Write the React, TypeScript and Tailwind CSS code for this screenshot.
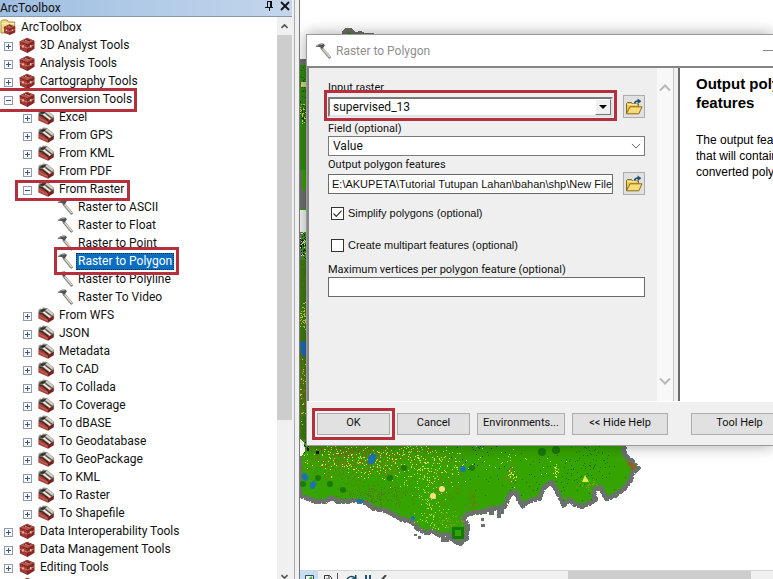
import { useState } from "react";
import type { ReactNode } from "react";

type IconKind = "root" | "toolbox" | "toolset" | "tool";

interface TreeItem {
  label: string;
  level: 0 | 1 | 2 | 3;
  open?: boolean;
  mark?: string;
}

const ICONS: IconKind[] = ["root", "toolbox", "toolset", "tool"];
const INDENT = ["pl-0", "pl-1", "pl-[23px]", "pl-[57px]"];

const TREE: TreeItem[] = [
  { label: "ArcToolbox", level: 0 },
  { label: "3D Analyst Tools", level: 1 },
  { label: "Analysis Tools", level: 1 },
  { label: "Cartography Tools", level: 1 },
  {
    label: "Conversion Tools",
    level: 1,
    open: true,
    mark: "-left-1 -top-[2px] w-[141px] h-6",
  },
  { label: "Excel", level: 2 },
  { label: "From GPS", level: 2 },
  { label: "From KML", level: 2 },
  { label: "From PDF", level: 2 },
  {
    label: "From Raster",
    level: 2,
    open: true,
    mark: "left-[15px] top-0 w-[115px] h-[21px]",
  },
  { label: "Raster to ASCII", level: 3 },
  { label: "Raster to Float", level: 3 },
  { label: "Raster to Point", level: 3 },
  {
    label: "Raster to Polygon",
    level: 3,
    mark: "left-[54px] -top-[5px] w-[125px] h-7",
  },
  { label: "Raster to Polyline", level: 3 },
  { label: "Raster To Video", level: 3 },
  { label: "From WFS", level: 2 },
  { label: "JSON", level: 2 },
  { label: "Metadata", level: 2 },
  { label: "To CAD", level: 2 },
  { label: "To Collada", level: 2 },
  { label: "To Coverage", level: 2 },
  { label: "To dBASE", level: 2 },
  { label: "To Geodatabase", level: 2 },
  { label: "To GeoPackage", level: 2 },
  { label: "To KML", level: 2 },
  { label: "To Raster", level: 2 },
  { label: "To Shapefile", level: 2 },
  { label: "Data Interoperability Tools", level: 1 },
  { label: "Data Management Tools", level: 1 },
  { label: "Editing Tools", level: 1 },
  { label: "", level: 1 },
];

function Toolbox() {
  return (
    <>
      <path d="M0.5 4.5 8 0.8l7.5 3v8L8.5 16 1 12.5z" fill="#7d2320" />
      <path d="M0.8 4.6 8 1.2l7 2.8-6.6 3.2z" fill="#b5564c" />
      <path d="M1 5.4 8 8v7.2L1.5 12z" fill="#a53a33" />
      <path d="M8.8 8 15 5v6.6l-6.2 3.6z" fill="#8a2723" />
      <path d="M4.5 3.6 8 2l3.6 1.4-3 1.6z" fill="#6b1c1a" />
      <path d="M1.2 8.4 8.4 11 15 7.8" stroke="#d98a80" strokeWidth="0.8" fill="none" />
      <path d="M4 8.2v2.2M11.8 8v2.4" stroke="#f2d5cb" strokeWidth="1.3" />
      <path d="M6 3.4 9.6 4.6" stroke="#e3a89d" strokeWidth="0.9" />
    </>
  );
}

function Hammer() {
  return (
    <>
      <path d="M7 5.4 14.4 14.2" stroke="#85837a" strokeWidth="2.8" strokeLinecap="round" />
      <path d="M7.4 5.4 14.4 13.6" stroke="#e4e1d5" strokeWidth="1.3" strokeLinecap="round" />
      <path d="M0.4 4.2C2 1.6 4.6 0.2 8 0.6L10 2 8.8 4 7.2 6 5.6 4.6C4 3.6 2.4 3.8 0.4 4.2z" fill="#505353" />
      <path d="M1.8 3C3.6 1.6 5.4 1.2 7.8 1.6" stroke="#a2a8a8" strokeWidth="0.8" fill="none" />
    </>
  );
}

function ItemIcon({ kind, size = "size-4" }: { kind: IconKind; size?: string }) {
  return (
    <svg viewBox="0 0 16 16" className={`${size} shrink-0`} aria-hidden="true">
      {kind === "toolbox" && <Toolbox />}
      {kind === "tool" && <Hammer />}
      {kind === "root" && (
        <>
          <path d="M1 14V2.5L2.5 1H7l1.5 2h6.2v11z" fill="#f3dd83" stroke="#a58a3b" />
          <path d="M1.5 4.8h13" stroke="#fff3b8" />
          <g transform="translate(3.4 4.8) scale(.76 .7)">
            <Toolbox />
          </g>
        </>
      )}
      {kind === "toolset" && (
        <>
          <path d="M0.4 3.4 2 1.4 4 2 5 .6 9 1 15.8 6.6V10L10 14 0.4 7z" fill="#8d897f" />
          <path d="M0.4 7.4 3 6l9.6 5L10 15.8 0.4 11.4z" fill="#a8423b" />
          <path d="M10 12 15.8 8.6v3.6L10 15.8z" fill="#76211f" />
          <path d="M1 4.6 4.4 2.2 8.4 2 5.8 5z" fill="#2b2e2d" />
          <path d="M7.4 3 9.4 1.8 15.4 6.6 14.2 8.4z" fill="#d3cfc2" />
          <path d="M5.4 4.8 12.4 10.4" stroke="#f0eee4" strokeWidth="1.6" />
          <path d="M0.8 5.8 4 6.6 10.2 11.4" stroke="#33211f" strokeWidth="1.3" fill="none" />
          <path d="M7.6 4.6 14 9.2" stroke="#44403a" strokeWidth="0.9" />
          <path d="M1.4 9.4 9.4 13.4" stroke="#cf7c72" strokeWidth="0.7" />
        </>
      )}
    </svg>
  );
}

function Expander({ open, label, onClick }: { open: boolean; label: string; onClick: () => void }) {
  return (
    <button type="button" aria-label={`Toggle ${label}`} onClick={onClick} className="mr-1.5 mt-0.5 size-[9px] shrink-0">
      <svg viewBox="0 0 9 9" className="block size-full" shapeRendering="crispEdges">
        <rect x="0.5" y="0.5" width="8" height="8" fill="#fbfbfb" stroke="#919aa8" />
        <path d={open ? "M2 4.5h5" : "M2 4.5h5M4.5 2v5"} stroke="#3f5686" />
      </svg>
    </button>
  );
}

function Chevron({ d, className }: { d: string; className: string }) {
  return (
    <svg viewBox="0 0 12 8" className={className} fill="none" aria-hidden="true">
      <path d={d} stroke="currentColor" />
    </svg>
  );
}

function ToolboxPanel() {
  const [selected, setSelected] = useState("Raster to Polygon");
  const [opened, setOpened] = useState<Record<string, boolean>>({});

  return (
    <aside className="flex w-[295px] shrink-0 flex-col border-r border-[#a9adb3] bg-[#f0f0f0] pr-0.5">
      <header className="flex h-[17px] shrink-0 items-center border-b border-[#8997a9] bg-linear-to-r from-[#9fbfe2] to-[#c3d6ec] text-[#111]">
        <h1 className="-mt-px flex-1 leading-4">ArcToolbox</h1>
        <button type="button" aria-label="Auto hide" className="mr-1.5 mb-1 size-2.5">
          <svg viewBox="0 0 10 10" className="block size-full" fill="none" stroke="#111" shapeRendering="crispEdges">
            <path d="M3 0.5h4.5M3.5 0v6M6.5 0v6M7.5 0v6M1 6.5h8M5.5 6v4" />
          </svg>
        </button>
        <button type="button" aria-label="Close" className="mr-0.5 mb-1 size-2.5">
          <svg viewBox="0 0 10 10" className="block size-full" fill="none" stroke="#111" strokeWidth="1.8">
            <path d="M1 1l8 8M9 1 1 9" />
          </svg>
        </button>
      </header>
      <div className="flex min-h-0 flex-1 bg-white">
        <ul className="min-w-0 flex-1 pt-px">
          {TREE.map((item) => {
            const active = item.label === selected;
            const open = opened[item.label] ?? !!item.open;
            return (
              <li key={item.label} className={`relative flex h-[18px] items-center ${INDENT[item.level]}`}>
                {(item.level === 1 || item.level === 2) && (
                  <Expander
                    open={open}
                    label={item.label}
                    onClick={() => setOpened((prev) => ({ ...prev, [item.label]: !open }))}
                  />
                )}
                <ItemIcon kind={ICONS[item.level]} />
                <button
                  type="button"
                  onClick={() => setSelected(item.label)}
                  className={`ml-[3px] px-0.5 leading-[17px] whitespace-nowrap ${
                    active ? "bg-[#0a6fc2] text-white outline-1 -outline-offset-1 outline-dotted outline-[#16293c]" : ""
                  }`}
                >
                  {item.label}
                </button>
                {item.mark && (
                  <span className={`pointer-events-none absolute z-10 border-3 border-[#b5303c] ${item.mark}`} />
                )}
              </li>
            );
          })}
        </ul>
        <div className="flex w-[15px] shrink-0 flex-col bg-[#f0f0f0] text-[#505050]">
          <div className="flex h-[18px] items-center justify-center">
            <Chevron d="M2 6.5 6 2.5l4 4" className="h-1.5 w-[9px] stroke-2" />
          </div>
          <div className="h-[385px] bg-[#cdcdcd]" />
          <div className="flex-1" />
          <div className="flex h-[5px] items-center justify-center">
            <Chevron d="M2 1.5l4 4 4-4" className="h-1.5 w-[9px] stroke-2" />
          </div>
        </div>
      </div>
    </aside>
  );
}

// [x, y, spread x, spread y, count, colour]
const CLUSTERS: [number, number, number, number, number, string][] = [
  [45, 452, 70, 34, 1100, "#5f7f12"],
  [50, 458, 60, 25, 520, "#7a6a12"],
  [120, 455, 60, 25, 420, "#6c7a10"],
  [60, 455, 70, 25, 260, "#e0ee4c"],
  [125, 462, 45, 30, 170, "#e0ee4c"],
  [75, 495, 45, 14, 240, "#5b7312"],
  [130, 500, 20, 36, 120, "#bfd93a"],
  [145, 488, 20, 24, 120, "#6c7a10"],
  [172, 500, 8, 16, 70, "#6c7a10"],
  [150, 520, 18, 10, 60, "#8b9c1a"],
  [210, 475, 7, 14, 70, "#79851a"],
  [212, 476, 5, 12, 22, "#e0ee4c"],
  [256, 470, 3, 8, 26, "#e0ee4c"],
  [288, 484, 12, 6, 30, "#8f9a1b"],
  [180, 450, 34, 20, 36, "#12305c"],
  [240, 475, 90, 30, 90, "#1c6b12"],
  [290, 460, 30, 24, 70, "#246a14"],
  [190, 460, 90, 20, 40, "#d8e84a"],
  [3, 80, 5, 20, 24, "#1f5a12"],
  [3, 112, 5, 13, 50, "#203c0c"],
  [3, 112, 5, 13, 30, "#d6e35a"],
  [3, 245, 5, 14, 70, "#16240c"],
  [3, 245, 5, 14, 26, "#f4f4e0"],
  [3, 272, 5, 20, 50, "#547a1c"],
  [3, 316, 5, 16, 60, "#d0dc3c"],
  [3, 388, 5, 46, 230, "#6b7a18"],
  [3, 388, 5, 46, 36, "#d8e060"],
  [3, 446, 6, 8, 26, "#101010"],
];

function scatter() {
  let seed = 20210;
  const next = () => {
    seed = (seed * 1664525 + 1013904223) % 4294967296;
    return seed / 4294967296;
  };
  return CLUSTERS.map(([x, y, sx, sy, count, color]) => {
    let d = "";
    for (let i = 0; i < count; i++) {
      const px = Math.round(x + (next() + next() - 1) * sx);
      const py = Math.round(y + (next() + next() - 1) * sy);
      d += `M${px} ${py}h1v1h-1z`;
    }
    return { d, color };
  });
}

const SPECKLES = scatter();
const LAND =
  "M0 62H8V440H326L323 450 325 456 331 461 337 468 332 473 330 480 324 488 315 495 307 498 304 494 301 487 296 488 293 493 295 499 289 503 282 506 275 504 270 499 264 504 261 498 256 488 252 482 247 484 242 490 239 498 230 500 223 505 219 499 216 492 210 493 207 500 204 506 197 508 190 508 185 511 178 512 168 513 163 518 167 526 166 538 160 543 153 540 149 534 141 535 133 531 126 532 118 528 112 521 102 519 95 515 86 510 74 508 66 502 54 500 46 501 38 501 31 497 25 501 16 501 8 498 0 495Z";

function MapCanvas() {
  return (
    <svg
      viewBox="0 0 473 570"
      className="absolute top-0 left-0 h-[570px] w-[473px]"
      shapeRendering="crispEdges"
      role="img"
      aria-label="Classified land cover map"
    >
      <defs>
        <clipPath id="land">
          <path d={LAND} />
        </clipPath>
      </defs>
      <path d="M42 36v-5l3-3h6l4 4 6-1 4 2h9v3z" fill="#6d706a" />
      <path d="M48 34v-3l5 3z" fill="#37850f" />
      <path d={LAND} fill="#36a400" stroke="#6b716b" strokeWidth="6" strokeDasharray="6 1 3 1" />
      <path d={LAND} fill="#36a400" stroke="#6b716b" strokeWidth="4" />
      <g clipPath="url(#land)">
        <path d="M0 60h8v110H0z" fill="#338c10" />
        <path d="M0 260h8v180H0z" fill="#3f7d10" />
        {SPECKLES.map((s, i) => (
          <path key={i} d={s.d} fill={s.color} />
        ))}
        <path d="M0 60h8v5H0zM0 190h8v18H0z" fill="#6f746f" />
        <path d="M0 210h8v22H0z" fill="#f5f5f5" />
        <path d="M1 82h5v5H1z" fill="#d8d58c" />
        <path d="M0 342h8v14H2z" fill="#1d6bc4" />
        <path d="M0 439l4 4 1 8-3 5H0z" fill="#fff" />
        <path d="M332 468l-7-5 6-1 6 6-9 3z" fill="#8a6420" />
      </g>
      <g fill="#1e73a8" shapeRendering="auto">
        <ellipse cx="72" cy="459" rx="4" ry="6" transform="rotate(25 72 459)" />
        <ellipse cx="13" cy="485" rx="3" ry="4" transform="rotate(25 13 485)" />
        <ellipse cx="5" cy="477" rx="3" ry="4" transform="rotate(-30 5 477)" />
        <ellipse cx="60" cy="501" rx="4" ry="2" />
        <ellipse cx="163" cy="469" rx="3" ry="3" />
        <ellipse cx="113" cy="518" rx="2" ry="2" />
      </g>
      <g fill="#1b7a0c" shapeRendering="auto">
        <circle cx="104" cy="468" r="3" />
        <circle cx="90" cy="478" r="3" />
        <circle cx="43" cy="490" r="3" />
        <circle cx="30" cy="484" r="3" />
        <circle cx="18" cy="478" r="3" />
        <circle cx="3" cy="484" r="3" />
        <circle cx="172" cy="468" r="3" />
        <circle cx="242" cy="452" r="4" />
        <circle cx="256" cy="450" r="4" />
      </g>
      <g fill="#f4e184" shapeRendering="auto">
        <circle cx="133" cy="496" r="3" />
        <circle cx="142" cy="489" r="3" />
        <path d="M285 475l4 7h-7z" fill="#d9f04a" />
      </g>
      <path d="M153 528h9v9h-9z" fill="#36a400" stroke="#147a06" strokeWidth="3" />
      <path d="M114 534h3v2h-3zM118 536h3v3h-3zM181 518h3v3h-3zM181 524h4v3h-4zM189 510h5v5h-5zM197 509h7v5h-3v4h-4zM141 537h8v5h-8z" fill="#6b716b" />
      <path d="M7 448h2v3H7zM16 451h3v3h-3z" fill="#151515" />
    </svg>
  );
}

function FolderButton({ label }: { label: string }) {
  return (
    <button
      type="button"
      aria-label={label}
      className="flex h-[23px] w-[22px] shrink-0 items-center justify-center border border-[#adadad] bg-[#e1e1e1]"
    >
      <svg viewBox="0 0 18 18" className="size-[18px]">
        <path d="M1.5 15.5v-10l1-1h4l1 1.5h6v3" fill="#e9c65a" stroke="#8a6a18" />
        <path d="M1.5 15.8 5 8.8h12l-3.2 7z" fill="#fbdc76" stroke="#8a6a18" />
        <path d="M2.4 6.6h9.4" stroke="#fff2b5" />
        <path d="M9.5 5.5c.4-2 1.6-2.4 3.6-2.4" stroke="#1f5068" strokeWidth="1.5" fill="none" />
        <path d="M12.6.4 16.4 3.2l-3.8 2.8z" fill="#1f5068" />
      </svg>
    </button>
  );
}

function FieldLabel({ htmlFor, children }: { htmlFor: string; children: ReactNode }) {
  return (
    <label htmlFor={htmlFor} className="block h-3.5 leading-3.5 whitespace-nowrap">
      {children}
    </label>
  );
}

function CheckRow({ label, initial }: { label: string; initial: boolean }) {
  const [checked, setChecked] = useState(initial);
  return (
    <label className="flex h-4 w-fit items-center gap-1 pl-[3px] font-['Liberation_Sans',sans-serif]">
      <span className="relative block size-[13px]">
        <input
          type="checkbox"
          checked={checked}
          onChange={(e) => setChecked(e.target.checked)}
          className="block size-[13px] appearance-none border border-[#333] bg-white"
        />
        {checked && (
          <svg viewBox="0 0 13 13" className="pointer-events-none absolute inset-0" fill="none">
            <path d="M2.5 6.5 5.3 9.3 10.5 3.6" stroke="#333" strokeWidth="1.2" />
          </svg>
        )}
      </span>
      {label}
    </label>
  );
}

function DialogButton({ width, children }: { width: string; children: ReactNode }) {
  return (
    <button
      type="button"
      className={`block h-[22px] shrink-0 border border-[#adadad] bg-[#e1e1e1] whitespace-nowrap ${width}`}
    >
      {children}
    </button>
  );
}

function RasterDialog() {
  const [output, setOutput] = useState("E:\\AKUPETA\\Tutorial Tutupan Lahan\\bahan\\shp\\New File");
  const [maxVertices, setMaxVertices] = useState("");

  return (
    <section
      role="dialog"
      aria-label="Raster to Polygon"
      className="absolute top-[34px] right-0 left-1.5 overflow-hidden border border-r-0 border-[#9a9a9a] bg-[#f0f0f0] text-[11px] shadow-[0_0_14px_rgba(0,0,0,0.35)]"
    >
      <header className="flex h-[31px] items-center bg-white pl-2">
        <ItemIcon kind="tool" />
        <h2 className="ml-[5px] flex-1 text-xs text-[#8f8f8f]">Raster to Polygon</h2>
        <button type="button" aria-label="Minimize" className="h-3 w-2.5">
          <span className="block h-px bg-[#8a8a8a]" />
        </button>
      </header>

      <div className="flex border-t-2 border-[#858585]">
        <form className="w-[350px] shrink-0 border-l-2 border-[#858585] bg-[#efefef] pt-[13px] pr-3 pb-[104px] pl-[19px]">
          <FieldLabel htmlFor="input-raster">Input raster</FieldLabel>
          <div className="relative flex h-[23px] items-center gap-2.5">
            <div className="relative flex-1">
              <select
                id="input-raster"
                className="block h-5 w-full appearance-none border-2 border-[#e3e3e3] border-t-[#7a7a7a] border-l-[#7a7a7a] bg-white pl-[3px] text-xs leading-4"
              >
                <option>supervised_13</option>
              </select>
              <span className="pointer-events-none absolute top-0.5 right-0.5 flex h-4 w-4 items-center justify-center border border-[#fff] border-r-[#777] border-b-[#777] bg-[#f0f0f0]">
                <svg viewBox="0 0 8 4" className="h-1 w-2">
                  <path d="M0 0h8L4 4z" fill="#000" />
                </svg>
              </span>
            </div>
            <FolderButton label="Browse input raster" />
            <span className="pointer-events-none absolute -top-[5px] -left-1 h-[31px] w-[293px] border-3 border-[#b5303c]" />
          </div>
          <div className="mt-1">
            <FieldLabel htmlFor="field">Field (optional)</FieldLabel>
            <div className="relative">
              <select
                id="field"
                className="block h-5 w-full appearance-none border border-[#7a7a7a] bg-white pl-1 text-xs leading-4"
              >
                <option>Value</option>
              </select>
              <Chevron
                d="M1 1.5l5 5 5-5"
                className="pointer-events-none absolute top-1.5 right-1 h-2 w-2.5 text-[#444]"
              />
            </div>
          </div>
          <div className="mt-0.5">
            <FieldLabel htmlFor="output">Output polygon features</FieldLabel>
            <div className="flex h-[23px] items-center gap-2.5">
              <input
                id="output"
                value={output}
                onChange={(e) => setOutput(e.target.value)}
                className="h-5 min-w-0 flex-1 border border-[#6a6a6a] bg-white pl-[3px] font-['Liberation_Sans',sans-serif]"
              />
              <FolderButton label="Browse output features" />
            </div>
          </div>
          <div className="my-2.5 flex flex-col gap-4">
            <CheckRow label="Simplify polygons (optional)" initial={true} />
            <CheckRow label="Create multipart features (optional)" initial={false} />
          </div>
          <FieldLabel htmlFor="max-vertices">Maximum vertices per polygon feature (optional)</FieldLabel>
          <input
            id="max-vertices"
            value={maxVertices}
            onChange={(e) => setMaxVertices(e.target.value)}
            className="block h-5 w-full border border-[#6a6a6a] bg-white px-1"
          />
        </form>

        <div className="flex w-4 shrink-0 flex-col items-center justify-between bg-[#f8f8f8] pt-4 pb-4 text-[#b9b9b9]">
          <Chevron d="M1 6.5l5-5 5 5" className="h-2 w-3 stroke-2" />
          <Chevron d="M1 1.5l5 5 5-5" className="h-2 w-3 stroke-2" />
        </div>
        <div className="w-[5px] shrink-0 border-l border-[#c5c5c5] bg-[#f0f0f0]" />

        <article className="min-w-0 flex-1 overflow-hidden border-l-2 border-[#6a6a6a] bg-white pt-1.5 pl-4 font-['Liberation_Sans',sans-serif] whitespace-nowrap text-black">
          <h3 className="text-[15px] leading-[19px] font-bold">
            Output polygon
            <br />
            features
          </h3>
          <p className="mt-5 text-xs leading-4">
            The output feature class
            <br />
            that will contain the
            <br />
            converted polygons.
          </p>
        </article>
      </div>

      <footer className="flex h-11 items-center gap-[7px] border-t border-white pl-2.5">
        <div className="relative">
          <DialogButton width="w-[73px]">OK</DialogButton>
          <span className="pointer-events-none absolute -inset-[5px] border-3 border-[#b5303c]" />
        </div>
        <DialogButton width="w-[73px]">Cancel</DialogButton>
        <DialogButton width="w-[88px]">Environments...</DialogButton>
        <DialogButton width="w-24">&lt;&lt; Hide Help</DialogButton>
        <div className="ml-4">
          <DialogButton width="w-[97px]">Tool Help</DialogButton>
        </div>
      </footer>
    </section>
  );
}

function StatusBar() {
  return (
    <footer className="flex h-[9px] shrink-0 overflow-hidden border-t border-[#d4d4d4] bg-[#f0f0f0]">
      <div className="flex h-5 w-[268px] shrink-0 items-start">
        <button type="button" aria-label="Data view" className="flex h-5 w-[18px] justify-center bg-[#c4dff5] pt-1">
          <svg viewBox="0 0 9 12" className="h-3 w-[9px]" fill="none">
            <path d="M.5.5h8v11h-8z" fill="#e9f4e4" stroke="#2e4f4a" />
            <path d="M2 7 7 2" stroke="#4f9a50" strokeWidth="2" />
          </svg>
        </button>
        <button type="button" aria-label="Layout view" className="flex h-5 w-[19px] justify-center pt-1">
          <svg viewBox="0 0 8 12" className="h-3 w-2" fill="none" stroke="#333">
            <path d="M.5.5h5l2 2v9h-7zM2 4h4M5 1v2" />
          </svg>
        </button>
        <span className="mt-0.5 h-5 w-px bg-[#555]" />
        <button type="button" aria-label="Refresh" className="ml-2 flex h-5 w-[11px] pt-1">
          <svg viewBox="0 0 11 12" className="h-3 w-[11px]" fill="none" stroke="#174a63" strokeWidth="1.5">
            <path d="M1 5a4.5 4 0 0 1 8-2M9.8 0v4H6M10 7a4.5 4 0 0 1-8 2" />
          </svg>
        </button>
        <button type="button" aria-label="Pause drawing" className="ml-2 flex h-5 w-1.5 pt-1">
          <svg viewBox="0 0 6 12" className="h-3 w-1.5" stroke="#1d5379" strokeWidth="2">
            <path d="M1 0v10M5 0v10" />
          </svg>
        </button>
        <button type="button" aria-label="Scroll left" className="ml-2.5 flex h-5 w-1.5 pt-1">
          <svg viewBox="0 0 6 10" className="h-2.5 w-1.5" fill="none" stroke="#444" strokeWidth="2">
            <path d="M5 0 1 4.5 5 9" />
          </svg>
        </button>
      </div>
      <div className="h-5 w-[183px] bg-[#cdcdcd]" />
    </footer>
  );
}

export default function App() {
  return (
    <div className="flex h-screen overflow-hidden bg-[#f0f0f0] font-['Roboto',sans-serif] text-xs text-[#111]">
      <ToolboxPanel />
      <main className="ml-1 flex min-w-0 flex-1 flex-col border-l border-[#777]">
        <div className="relative min-h-0 flex-1 overflow-hidden bg-white">
          <MapCanvas />
          <RasterDialog />
        </div>
        <StatusBar />
      </main>
    </div>
  );
}
